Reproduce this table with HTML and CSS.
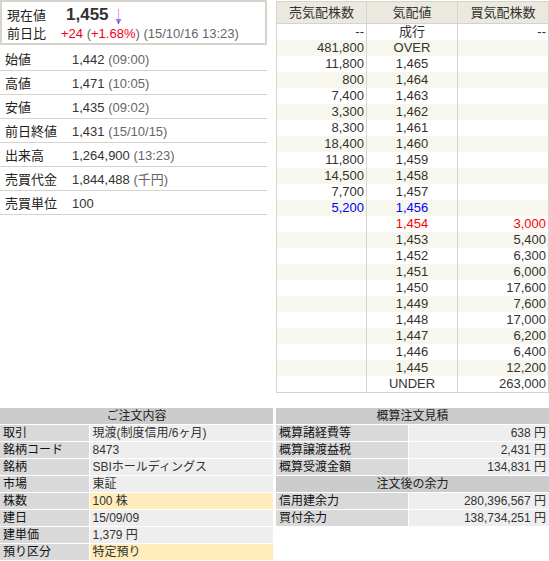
FILE: index.html
```html
<!DOCTYPE html>
<html lang="ja">
<head>
<meta charset="utf-8">
<link rel="stylesheet" href="styles.css">
</head>
<body>
<div class="top">
  <div class="left">
    <div class="now-box">
      <div class="now-row">
        <span class="now-label">現在値</span>
        <span class="now-price">1,455</span>
        <svg class="arrow" width="7" height="16" viewBox="0 0 7 16"><line x1="3.5" y1="0" x2="3.5" y2="12" stroke="#f2a2f2" stroke-width="1.4"/><polygon points="0.5,10 6.5,10 3.5,15.5" fill="#9a78f2"/><line x1="3.5" y1="12" x2="3.5" y2="15" stroke="#4a5af0" stroke-width="1"/></svg>
      </div>
      <div class="now-row small">
        <span class="now-label">前日比</span>
        <span class="up">+24</span>&nbsp;<span class="sub">(</span><span class="up">+1.68%</span><span class="sub">)</span>&nbsp;<span class="sub">(15/10/16 13:23)</span>
      </div>
    </div>
    <ul class="info">
      <li><span class="info-label">始値</span><span class="info-val">1,442 <span class="sub">(09:00)</span></span></li>
      <li><span class="info-label">高値</span><span class="info-val">1,471 <span class="sub">(10:05)</span></span></li>
      <li><span class="info-label">安値</span><span class="info-val">1,435 <span class="sub">(09:02)</span></span></li>
      <li><span class="info-label">前日終値</span><span class="info-val">1,431 <span class="sub">(15/10/15)</span></span></li>
      <li><span class="info-label">出来高</span><span class="info-val">1,264,900 <span class="sub">(13:23)</span></span></li>
      <li><span class="info-label">売買代金</span><span class="info-val">1,844,488 <span class="sub">(千円)</span></span></li>
      <li><span class="info-label">売買単位</span><span class="info-val">100</span></li>
    </ul>
  </div>
  <table class="book">
    <thead>
      <tr><th>売気配株数</th><th>気配値</th><th>買気配株数</th></tr>
    </thead>
    <tbody>
      <tr><td class="num">--</td><td class="mid">成行</td><td class="num">--</td></tr>
      <tr><td class="num">481,800</td><td class="mid">OVER</td><td class="num"></td></tr>
      <tr><td class="num">11,800</td><td class="mid">1,465</td><td class="num"></td></tr>
      <tr><td class="num">800</td><td class="mid">1,464</td><td class="num"></td></tr>
      <tr><td class="num">7,400</td><td class="mid">1,463</td><td class="num"></td></tr>
      <tr><td class="num">3,300</td><td class="mid">1,462</td><td class="num"></td></tr>
      <tr><td class="num">8,300</td><td class="mid">1,461</td><td class="num"></td></tr>
      <tr><td class="num">18,400</td><td class="mid">1,460</td><td class="num"></td></tr>
      <tr><td class="num">11,800</td><td class="mid">1,459</td><td class="num"></td></tr>
      <tr><td class="num">14,500</td><td class="mid">1,458</td><td class="num"></td></tr>
      <tr><td class="num">7,700</td><td class="mid">1,457</td><td class="num"></td></tr>
      <tr><td class="num blue">5,200</td><td class="mid blue">1,456</td><td class="num"></td></tr>
      <tr><td class="num"></td><td class="mid red">1,454</td><td class="num red">3,000</td></tr>
      <tr><td class="num"></td><td class="mid">1,453</td><td class="num">5,400</td></tr>
      <tr><td class="num"></td><td class="mid">1,452</td><td class="num">6,300</td></tr>
      <tr><td class="num"></td><td class="mid">1,451</td><td class="num">6,000</td></tr>
      <tr><td class="num"></td><td class="mid">1,450</td><td class="num">17,600</td></tr>
      <tr><td class="num"></td><td class="mid">1,449</td><td class="num">7,600</td></tr>
      <tr><td class="num"></td><td class="mid">1,448</td><td class="num">17,000</td></tr>
      <tr><td class="num"></td><td class="mid">1,447</td><td class="num">6,200</td></tr>
      <tr><td class="num"></td><td class="mid">1,446</td><td class="num">6,400</td></tr>
      <tr><td class="num"></td><td class="mid">1,445</td><td class="num">12,200</td></tr>
      <tr><td class="num"></td><td class="mid">UNDER</td><td class="num">263,000</td></tr>
    </tbody>
  </table>
</div>
<div class="bottom">
  <table class="panel order">
    <colgroup><col class="c-lab"><col></colgroup>
    <tr><th colspan="2">ご注文内容</th></tr>
    <tr><td class="lab">取引</td><td class="val">現渡(制度信用/6ヶ月)</td></tr>
    <tr><td class="lab">銘柄コード</td><td class="val">8473</td></tr>
    <tr><td class="lab">銘柄</td><td class="val">SBIホールディングス</td></tr>
    <tr><td class="lab">市場</td><td class="val">東証</td></tr>
    <tr><td class="lab">株数</td><td class="val hl">100 株</td></tr>
    <tr><td class="lab">建日</td><td class="val">15/09/09</td></tr>
    <tr><td class="lab">建単価</td><td class="val">1,379 円</td></tr>
    <tr><td class="lab">預り区分</td><td class="val hl">特定預り</td></tr>
  </table>
  <table class="panel est">
    <colgroup><col class="c-lab"><col></colgroup>
    <tr><th colspan="2">概算注文見積</th></tr>
    <tr><td class="lab">概算諸経費等</td><td class="val right">638 円</td></tr>
    <tr><td class="lab">概算譲渡益税</td><td class="val right">2,431 円</td></tr>
    <tr><td class="lab">概算受渡金額</td><td class="val right">134,831 円</td></tr>
    <tr><th colspan="2">注文後の余力</th></tr>
    <tr><td class="lab">信用建余力</td><td class="val right">280,396,567 円</td></tr>
    <tr><td class="lab">買付余力</td><td class="val right">138,734,251 円</td></tr>
  </table>
</div>
</body>
</html>
```

FILE: styles.css
```css
html, body {
  margin: 0;
  padding: 0;
  background: #fff;
}
body {
  font-family: "Liberation Sans", "Noto Sans CJK JP", sans-serif;
  font-size: 13px;
  color: #333;
}
.top {
  display: flex;
  align-items: flex-start;
  height: 408px;
}
.left {
  width: 267px;
  margin-right: 9px;
}
.now-box {
  border: 2px solid #d6d3ca;
  padding: 3px 0 0 5px;
  box-sizing: border-box;
  height: 45px;
}
.now-row {
  display: flex;
  align-items: baseline;
  line-height: 19px;
  white-space: nowrap;
}
.now-row.small {
  line-height: 18px;
  color: #666;
}
.now-label {
  width: 54px;
  color: #222;
  flex: none;
}
.now-price {
  font-size: 17px;
  font-weight: bold;
  color: #333;
  margin-left: 5px;
}
.arrow {
  margin-left: 6px;
  align-self: center;
  margin-top: 3px;
}
.up { color: #f00020; }
.sub { color: #666; }
.info {
  list-style: none;
  margin: 2px 0 0;
  padding: 0;
}
.info li {
  display: flex;
  height: 23px;
  line-height: 26px;
  border-bottom: 1px solid #d6d3ca;
  white-space: nowrap;
}
.info-label {
  width: 67px;
  padding-left: 5px;
  color: #222;
  flex: none;
}
.info-val { color: #333; }

.book {
  width: 273px;
  margin-top: 1px;
  border-collapse: collapse;
  border: 1px solid #d6d3ca;
  table-layout: fixed;
}
.book th {
  background: #ebe9df;
  font-weight: normal;
  color: #333;
  height: 21px;
  padding: 0;
  line-height: 21px;
  border-left: 1px solid #d6d3ca;
  border-bottom: 1px solid #d6d3ca;
}
.book th:first-child { width: 89px; }
.book th:nth-child(2) { width: 90px; }
.book td {
  height: 16px;
  line-height: 16px;
  padding: 0 2px;
  border-left: 1px solid #d6d3ca;
}
.book tbody tr:nth-child(even) { background: #f7f7ee; }
.book .num { text-align: right; }
.book .mid { text-align: center; }
.blue { color: #0000ff; }
.red { color: #ff0000; }

.bottom {
  display: flex;
  gap: 3px;
  align-items: flex-start;
}
.panel {
  width: 273px;
  border-collapse: collapse;
  font-size: 12px;
  table-layout: fixed;
}
.panel th {
  background: #cccccc;
  font-weight: normal;
  color: #222;
  height: 16px;
  line-height: 16px;
  padding: 0;
  border-bottom: 1px solid #fff;
}
.panel td {
  height: 16px;
  line-height: 16px;
  padding: 0 3px;
  border-bottom: 1px solid #fff;
  white-space: nowrap;
  overflow: hidden;
}
.panel .lab {
  background: #d9d9d9;
  color: #111;
  border-right: 1px solid #fff;
}
.panel .val {
  background: #eeeeee;
  color: #333;
}
.panel .val.hl { background: #ffeebc; }
.panel .right { text-align: right; }
.order .c-lab { width: 89px; }
.est .c-lab { width: 132px; }
```
